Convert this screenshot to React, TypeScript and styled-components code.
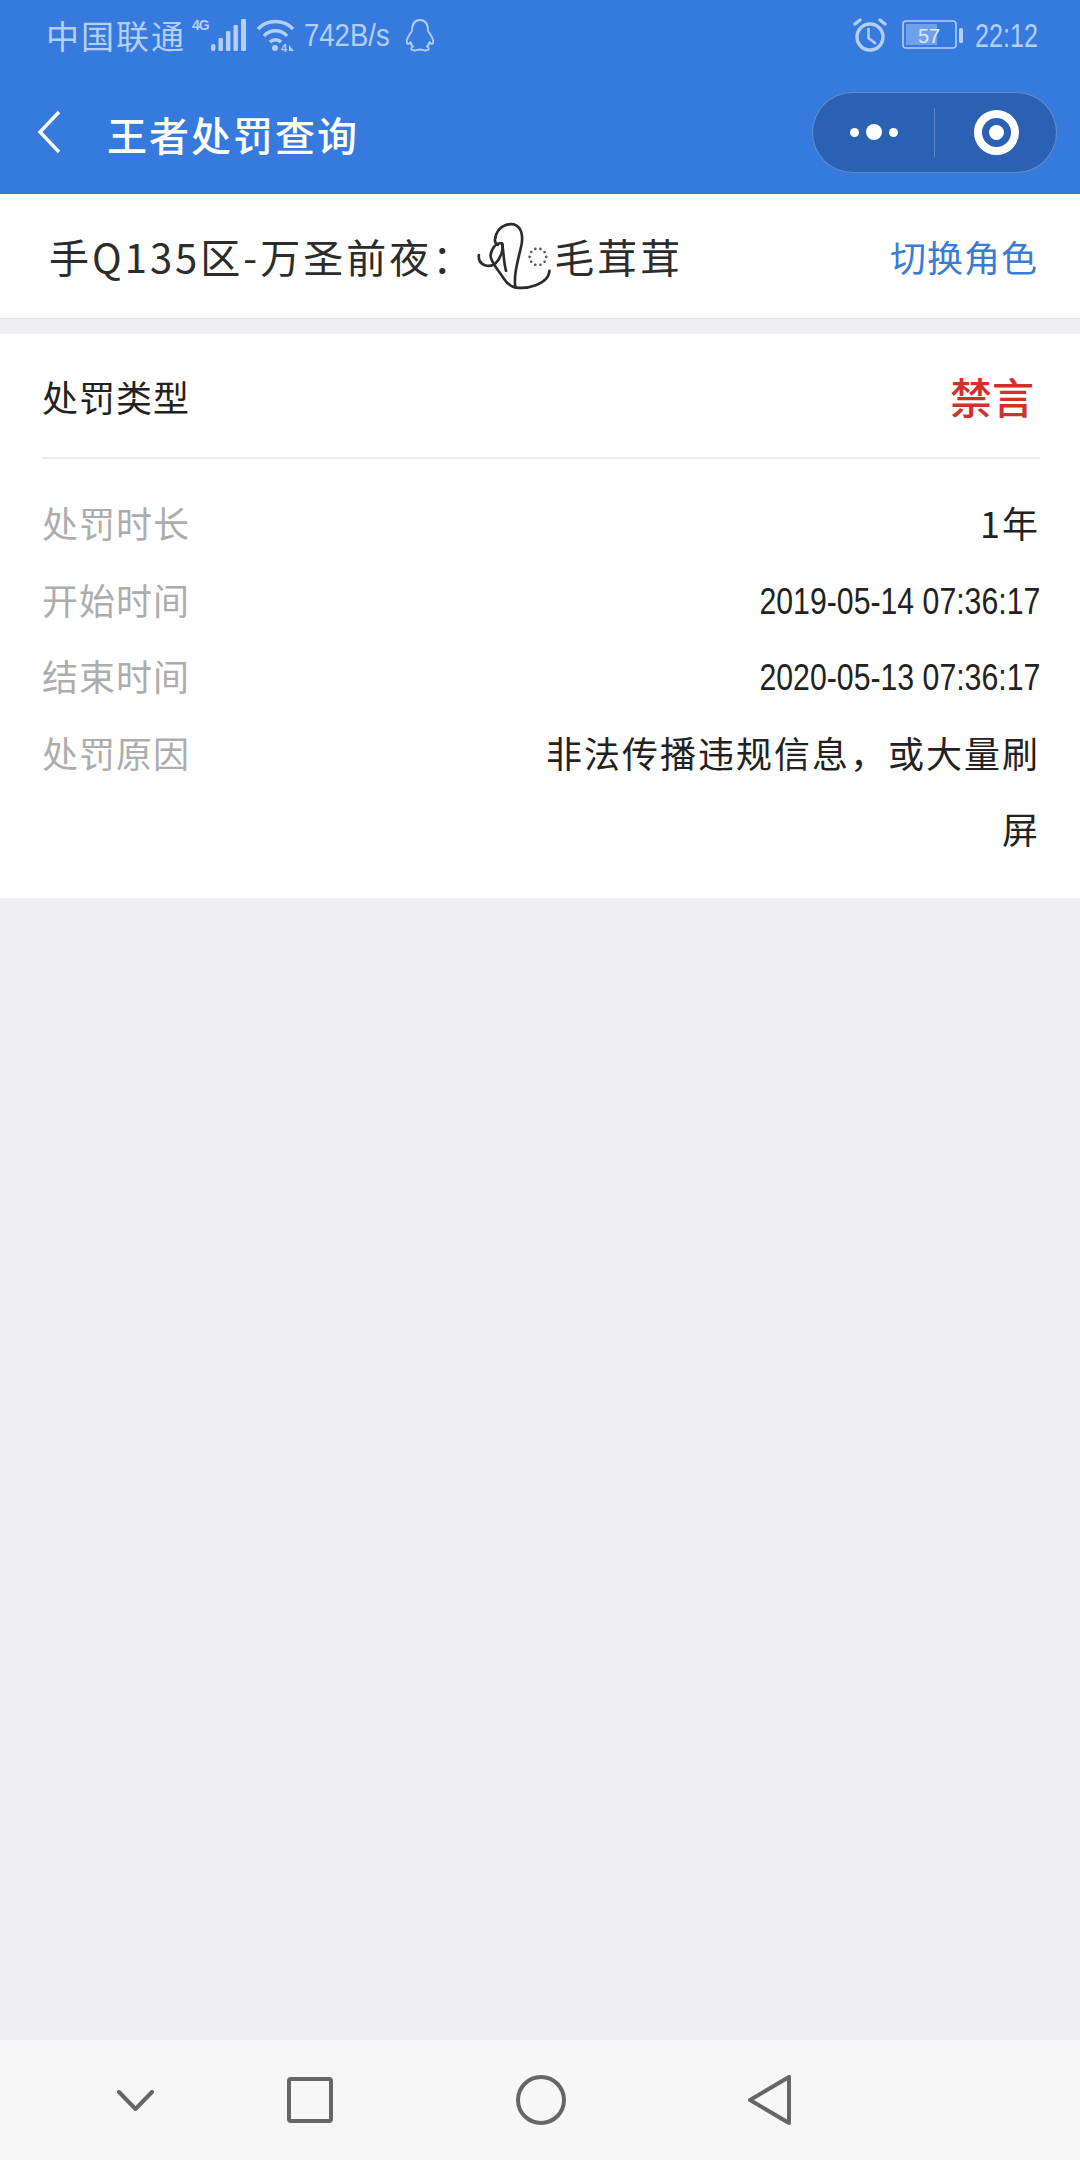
import React from 'react';
import styled, { createGlobalStyle } from 'styled-components';

const CJK = `'Noto Sans CJK SC', 'Noto Sans', sans-serif`;
const STATUS = '#b4cef6';

const GlobalStyle = createGlobalStyle`
  html, body {
    margin: 0;
    padding: 0;
    background: #eeeef3;
    font-family: ${CJK};
  }
`;

const Page = styled.div`
  height: 2160px;
  display: flex;
  flex-direction: column;
  overflow: hidden;
`;

const StatusBar = styled.div`
  height: 70px;
  padding: 0 42px 0 46px;
  display: flex;
  align-items: center;
  justify-content: space-between;
  background: #377ade;
  color: ${STATUS};
`;

const StatusGroup = styled.div`
  display: flex;
  align-items: center;
`;

const Carrier = styled.span`
  font-size: 33px;
  line-height: 40px;
  letter-spacing: 2px;
`;

const NetworkType = styled.span`
  align-self: flex-start;
  margin: 1px 2px 0 6px;
  font-family: 'Liberation Sans', sans-serif;
  font-size: 14px;
  font-weight: 700;
  line-height: 18px;
  letter-spacing: -1px;
`;

const Speed = styled.span`
  width: 85px;
  margin: 0 16px 0 8px;
  font-family: 'Liberation Sans', sans-serif;
  font-size: 32px;
  line-height: 40px;
  white-space: nowrap;
  transform: scaleX(0.86);
  transform-origin: left center;
`;

const Clock = styled.span`
  margin-left: 11px;
  width: 63px;
  font-family: 'Liberation Sans', sans-serif;
  font-size: 34px;
  line-height: 40px;
  white-space: nowrap;
  transform: scaleX(0.74);
  transform-origin: left center;
`;

const Header = styled.header`
  height: 124px;
  padding: 0 23px 0 37px;
  display: flex;
  align-items: center;
  background: #377ade;
`;

const Title = styled.h1`
  flex: 1;
  margin: 4px 0 0 46px;
  color: #fff;
  font-size: 40px;
  font-weight: 500;
  line-height: 56px;
  letter-spacing: 2px;
`;

const Capsule = styled.div`
  width: 245px;
  height: 81px;
  box-sizing: border-box;
  display: flex;
  align-items: center;
  background: #2a61b3;
  border: 1px solid rgba(255, 255, 255, 0.28);
  border-radius: 41px;
`;

const CapsuleCell = styled.div`
  flex: 1;
  display: flex;
  align-items: center;
  justify-content: center;
  gap: 7px;
`;

const Dot = styled.span<{ $size: number }>`
  width: ${(p) => p.$size}px;
  height: ${(p) => p.$size}px;
  border-radius: 50%;
  background: #fff;
`;

const CapsuleDivider = styled.span`
  width: 1px;
  height: 49px;
  background: rgba(255, 255, 255, 0.25);
`;

const Target = styled.span`
  width: 45px;
  height: 45px;
  margin-left: 2px;
  box-sizing: border-box;
  display: flex;
  align-items: center;
  justify-content: center;
  border: 8px solid #fff;
  border-radius: 50%;

  &::after {
    content: '';
    width: 15px;
    height: 15px;
    border-radius: 50%;
    background: #fff;
  }
`;

const RoleBar = styled.div`
  height: 124px;
  padding: 0 42px 0 49px;
  display: flex;
  align-items: center;
  background: #fff;
  border-bottom: 1px solid #e2e2e6;
`;

const RoleName = styled.div`
  flex: 1;
  display: flex;
  align-items: center;
  color: #2c2c2c;
  font-size: 40px;
  line-height: 56px;
`;

const ServerText = styled.span`
  letter-spacing: 3px;
`;

const NickText = styled.span`
  letter-spacing: 3px;
`;

const NickMark = styled.svg`
  width: 75px;
  height: 68px;
  margin: 0 2px 0 2px;
  flex: none;
`;

const SwitchRole = styled.span`
  color: #3a7bd5;
  font-size: 36px;
  line-height: 50px;
  letter-spacing: 1px;
`;

const Card = styled.section`
  margin-top: 15px;
  padding: 0 40px 31px 42px;
  background: #fff;
`;

const TypeRow = styled.div`
  height: 123px;
  display: flex;
  align-items: center;
  justify-content: space-between;
  border-bottom: 2px solid #ececee;
`;

const TypeLabel = styled.span`
  color: #222;
  font-size: 36px;
  letter-spacing: 1px;
`;

const TypeValue = styled.span`
  margin-right: 6px;
  color: #d0312d;
  font-size: 42px;
  font-weight: 500;
`;

const Details = styled.div`
  padding-top: 25px;
`;

const DetailRow = styled.div`
  display: flex;
  justify-content: space-between;
  font-size: 36px;
  line-height: 76.5px;
`;

const DetailLabel = styled.span`
  flex: none;
  color: #adadad;
  letter-spacing: 1px;
`;

const DetailValue = styled.span`
  max-width: 512px;
  color: #222;
  text-align: right;
  letter-spacing: 2px;
`;

const DateValue = styled.span`
  color: #222;
  font-family: 'Liberation Sans', sans-serif;
  font-size: 36px;
  white-space: nowrap;
  transform: translateY(3px) scaleX(0.84);
  transform-origin: right center;
`;

const Filler = styled.div`
  flex: 1;
`;

const NavBar = styled.nav`
  height: 120px;
  padding-left: 117px;
  display: flex;
  align-items: center;
  background: #f7f7f8;
`;

const NavIcon = styled.svg<{ $offset: number; $width: number; $height: number }>`
  width: ${(p) => p.$width}px;
  height: ${(p) => p.$height}px;
  margin-left: ${(p) => p.$offset}px;
  fill: none;
  stroke: #666;
  stroke-width: 4;
  stroke-linejoin: round;
  stroke-linecap: round;
`;

const Signal = () => (
  <svg width="36" height="34" viewBox="0 0 36 34" fill={STATUS}>
    <rect x="0" y="26" width="4.4" height="7" rx="2" />
    <rect x="7.5" y="20" width="4.4" height="13" rx="1" />
    <rect x="15" y="13" width="4.4" height="20" rx="1" />
    <rect x="22.5" y="7" width="4.4" height="26" rx="1" />
    <rect x="30" y="1" width="5" height="32" rx="1" />
  </svg>
);

const Wifi = () => (
  <svg width="40" height="34" viewBox="0 0 40 34" fill="none" stroke={STATUS} strokeWidth="3.4" style={{ marginLeft: 9 }}>
    <path d="M2 11 C11 1 28 1 37 11" />
    <path d="M8 18 C14 11 25 11 31 18" />
    <path d="M14 24 C17 21 22 21 25 24" />
    <circle cx="19" cy="30" r="3" fill={STATUS} stroke="none" />
    <text x="25" y="34" fontSize="11" fontWeight="700" fontFamily="Liberation Sans" fill={STATUS} stroke="none">4</text>
    <path d="M33 33 V27 L38 33 Z" fill={STATUS} stroke="none" />
  </svg>
);

const Penguin = () => (
  <svg width="30" height="34" viewBox="0 0 30 34" fill="none" stroke={STATUS} strokeWidth="1.8" strokeLinejoin="round" strokeLinecap="round">
    <path d="M7 13 C7 6 10 2 15 2 C20 2 23 6 23 13 C26 17 29 22 28 25 C27 27 25 25 24.5 24 C24 26 23 28 22 28.5 C25 30 24 32.5 21 32.5 C18 32.5 17 31.5 15 31.5 C13 31.5 12 32.5 9 32.5 C6 32.5 5 30 8 28.5 C7 28 6 26 5.5 24 C5 25 3 27 2 25 C1 22 4 17 7 13 Z" />
  </svg>
);

const Alarm = () => (
  <svg width="34" height="34" viewBox="0 0 34 34" fill="none" stroke={STATUS} strokeWidth="3.4" strokeLinecap="round">
    <circle cx="17" cy="19" r="13" />
    <path d="M15.5 11 V20 L22 25" strokeWidth="2.6" />
    <path d="M2 6 L7 2 M32 6 L27 2" />
  </svg>
);

const Battery = () => (
  <svg width="62" height="30" viewBox="0 0 62 30" style={{ marginLeft: 15 }}>
    <rect x="1" y="1" width="53" height="27" rx="3" fill="none" stroke={STATUS} strokeWidth="1.6" />
    <rect x="4" y="4" width="31" height="21" fill={STATUS} opacity="0.45" />
    <text x="27" y="23" fontSize="20" fontFamily="Liberation Sans" textAnchor="middle" fill="#dce8fb">57</text>
    <rect x="57" y="8" width="4" height="15" rx="1.5" fill={STATUS} />
  </svg>
);

const dotsAround = Array.from({ length: 10 }, (_, i) => {
  const a = (i / 10) * Math.PI * 2;
  return { x: 233 + Math.cos(a) * 25, y: 130 + Math.sin(a) * 25 };
});

const App = () => {
  return (
    <Page>
      <GlobalStyle />
      <StatusBar>
        <StatusGroup>
          <Carrier>中国联通</Carrier>
          <NetworkType>4G</NetworkType>
          <Signal />
          <Wifi />
          <Speed>742B/s</Speed>
          <Penguin />
        </StatusGroup>
        <StatusGroup>
          <Alarm />
          <Battery />
          <Clock>22:12</Clock>
        </StatusGroup>
      </StatusBar>

      <Header>
        <svg width="24" height="44" viewBox="0 0 24 44" fill="none" stroke="#fff" strokeWidth="3.4">
          <path d="M22 2 L3 22 L22 42" />
        </svg>
        <Title>王者处罚查询</Title>
        <Capsule>
          <CapsuleCell>
            <Dot $size={9} />
            <Dot $size={16} />
            <Dot $size={9} />
          </CapsuleCell>
          <CapsuleDivider />
          <CapsuleCell>
            <Target />
          </CapsuleCell>
        </Capsule>
      </Header>

      <RoleBar>
        <RoleName>
          <ServerText>手Q135区-万圣前夜：</ServerText>
          <NickMark viewBox="50 25 225 205" fill="none" stroke="#2c2c2c" strokeWidth="8" strokeLinecap="round">
            <path d="M105 72 C110 42 138 28 160 32 C186 40 191 72 180 110 C170 150 160 190 165 222 C195 228 265 215 268 172" />
            <path d="M55 125 C52 155 85 165 105 150 C125 130 130 100 125 90 C110 85 95 100 90 125 C90 145 110 165 130 195 C140 210 150 220 165 222" />
            <path d="M125 90 C130 115 130 150 137 172" />
            <path d="M105 72 C100 85 105 90 112 94" />
            {dotsAround.map((d) => (
              <circle key={`${d.x}-${d.y}`} cx={d.x} cy={d.y} r="4" fill="#555" stroke="none" />
            ))}
          </NickMark>
          <NickText>毛茸茸</NickText>
        </RoleName>
        <SwitchRole>切换角色</SwitchRole>
      </RoleBar>

      <Card>
        <TypeRow>
          <TypeLabel>处罚类型</TypeLabel>
          <TypeValue>禁言</TypeValue>
        </TypeRow>
        <Details>
          <DetailRow>
            <DetailLabel>处罚时长</DetailLabel>
            <DetailValue>1年</DetailValue>
          </DetailRow>
          <DetailRow>
            <DetailLabel>开始时间</DetailLabel>
            <DateValue>2019-05-14 07:36:17</DateValue>
          </DetailRow>
          <DetailRow>
            <DetailLabel>结束时间</DetailLabel>
            <DateValue>2020-05-13 07:36:17</DateValue>
          </DetailRow>
          <DetailRow>
            <DetailLabel>处罚原因</DetailLabel>
            <DetailValue>非法传播违规信息，或大量刷屏</DetailValue>
          </DetailRow>
        </Details>
      </Card>

      <Filler />

      <NavBar>
        <NavIcon $offset={0} $width={37} $height={21} viewBox="0 0 37 21">
          <path d="M2 2 L18.5 19 L35 2" />
        </NavIcon>
        <NavIcon $offset={133} $width={46} $height={46} viewBox="0 0 46 46">
          <rect x="2" y="2" width="42" height="42" rx="2" />
        </NavIcon>
        <NavIcon $offset={183} $width={50} $height={50} viewBox="0 0 50 50">
          <circle cx="25" cy="25" r="23" />
        </NavIcon>
        <NavIcon $offset={182} $width={43} $height={50} viewBox="0 0 43 50">
          <path d="M41 2 V48 L2 25 Z" />
        </NavIcon>
      </NavBar>
    </Page>
  );
};

export default App;
